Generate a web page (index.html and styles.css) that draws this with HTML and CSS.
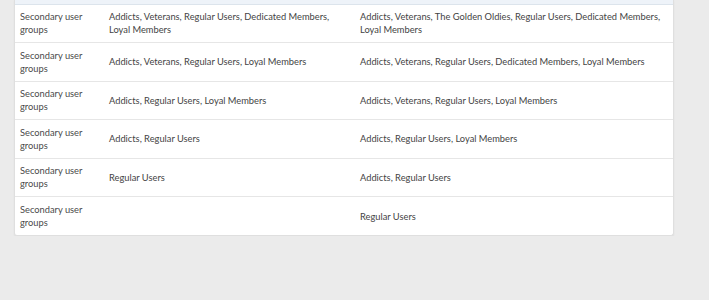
FILE: index.html
```html
<!DOCTYPE html>
<html>
<head>
  <title>User group changes</title>
  <meta name="viewport" content="width=device-width, initial-scale=1">
  <link rel="stylesheet" href="styles.css">
</head>
<body>
  <div class="block">
    <table class="changes">
      <colgroup>
        <col class="col-field">
        <col class="col-old">
        <col class="col-new">
      </colgroup>
      <thead>
        <tr>
          <th></th>
          <th></th>
          <th></th>
        </tr>
      </thead>
      <tbody>
        <tr>
          <td class="field">Secondary user groups</td>
          <td>Addicts, Veterans, Regular Users, Dedicated Members, Loyal Members</td>
          <td>Addicts, Veterans, The Golden Oldies, Regular Users, Dedicated Members, Loyal Members</td>
        </tr>
        <tr>
          <td class="field">Secondary user groups</td>
          <td>Addicts, Veterans, Regular Users, Loyal Members</td>
          <td>Addicts, Veterans, Regular Users, Dedicated Members, Loyal Members</td>
        </tr>
        <tr>
          <td class="field">Secondary user groups</td>
          <td>Addicts, Regular Users, Loyal Members</td>
          <td>Addicts, Veterans, Regular Users, Loyal Members</td>
        </tr>
        <tr>
          <td class="field">Secondary user groups</td>
          <td>Addicts, Regular Users</td>
          <td>Addicts, Regular Users, Loyal Members</td>
        </tr>
        <tr>
          <td class="field">Secondary user groups</td>
          <td>Regular Users</td>
          <td>Addicts, Regular Users</td>
        </tr>
        <tr>
          <td class="field">Secondary user groups</td>
          <td></td>
          <td>Regular Users</td>
        </tr>
      </tbody>
    </table>
  </div>
</body>
</html>
```

FILE: styles.css
```css
*, *::before, *::after {
  box-sizing: border-box;
  margin: 0;
  padding: 0;
}

body {
  font-family: "Segoe UI", Lato, sans-serif;
  font-size: 9.3px;
  line-height: 13px;
  color: #444;
  background-color: #ebebeb;
  padding: 0 35px 0 14px;
}

.block {
  width: 660px;
  background: #fff;
  border: 1px solid #dfdfdf;
  border-top: none;
  border-radius: 0 0 3px 3px;
  box-shadow: 0 1px 2px rgba(0, 0, 0, 0.06);
  overflow: hidden;
}

.changes {
  width: 100%;
  border-collapse: collapse;
  table-layout: fixed;
}

.col-field {
  width: 89px;
}

.col-old {
  width: 251px;
}

thead th {
  height: 4px;
  background: #eef3f9;
  border-bottom: 1px solid #dce4ec;
}

td {
  padding: 5px 6px 5px 5px;
  height: 38.5px;
  vertical-align: middle;
  border-bottom: 1px solid #e6e6e6;
}

tbody tr:last-child td {
  border-bottom: none;
}

td.field {
  color: #4a4a4a;
}
```
